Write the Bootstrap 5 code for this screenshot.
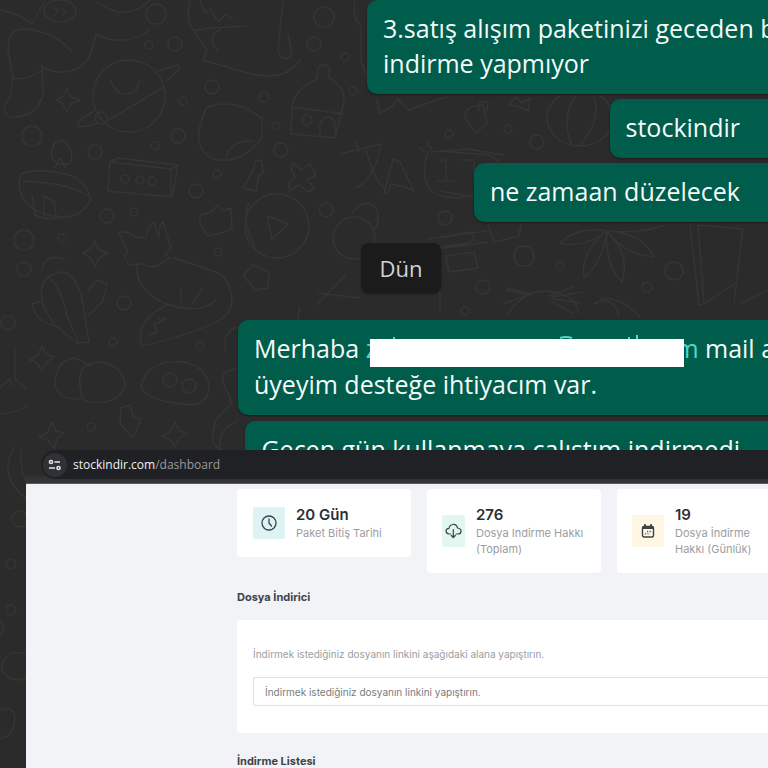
<!DOCTYPE html>
<html lang="tr">
<head>
<meta charset="utf-8">
<meta name="viewport" content="width=device-width, initial-scale=1">
<title>stockindir.com</title>
<link href="https://cdn.jsdelivr.net/npm/bootstrap@5.3.0/dist/css/bootstrap.min.css" rel="stylesheet">
<style>
body{background:#2b2b2b;font-family:Inter,"Open Sans",sans-serif;overflow:hidden}
.screen{min-height:100vh}
.doodles{position:absolute;inset:0;z-index:0;fill:none;stroke:#353534;stroke-width:1.5;stroke-linecap:round;stroke-linejoin:round}
.chat{height:450px;font-family:"Open Sans","Noto Sans",sans-serif;font-size:25px;line-height:35px;color:#f4fbf9;z-index:1}
.bubble{background:#005c4b;border-radius:10px 0 0 10px;padding:11px 28px 13px 16px;margin-bottom:5px;white-space:nowrap;flex:none;box-shadow:0 1px 2px #1a1a1a}
.bubble-first{width:401px}
.bubble-mail{width:530px;margin-bottom:6px}
.day{background:#1b1b1b;color:#d2d2d2;font-size:22px;line-height:26px;padding:12px 0;width:80px;flex:none;border-radius:8px;margin:16px 327px 27px 0;text-align:center;box-shadow:0 1px 2px #1a1a1a}
.mail-link{color:#53d6cb;text-decoration:none}
.redact{display:inline-block;width:314px;height:28px;background:#fff;vertical-align:-9px;margin-left:-7px;position:relative}
.redact svg{position:absolute;left:0;top:-4px;fill:none;stroke:#53d6cb;stroke-width:2}
.redact + span{margin-left:-9px}
.browser{margin-left:26px;z-index:1}
.toolbar{background:linear-gradient(#2b2b2b 0 24px,#353535 30px);height:34px;border-bottom:1px solid #5b5b5b}
.address{background:#202124;height:29px;margin-left:15px;border-radius:15px 0 0 15px;font-family:"Open Sans","Noto Sans",sans-serif;font-size:12px;color:#9a9b9e}
.address a{color:inherit;text-decoration:none}
.address b{color:#f1f1f1;font-weight:400}
.site-btn{width:24px;height:24px;background:#303136;border:0;border-radius:50%;padding:0;margin:0 6px 0 2px}
.dash{background:#f2f3f7;height:284px;padding:5px 0 0 211px;overflow:hidden}
.stats{gap:16px}
.stat{background:#fff;border-radius:4px;width:174px;flex:none;padding:16px;gap:11px}
.stat-wide{padding-left:15px}
.tile{width:32px;height:32px;border-radius:2px;flex:none}
.tile-time{background:#def4f4}
.tile-cloud{background:#e2f8ee;width:23px}
.tile-day{background:#fff6e3}
.tile svg{fill:none;stroke:#3b4248;stroke-linecap:round;stroke-linejoin:round}
.num{font-size:15px;line-height:20px;font-weight:600;color:#2c3036}
.cap{font-size:11px;line-height:16px;color:#9b9da1;white-space:nowrap}
.head{font-size:11px;line-height:16px;font-weight:700;color:#3e444b;margin:0}
.head-form{margin:16px 0 15px}
.head-list{margin-top:20px}
.panel{background:#fff;border-radius:4px 0 0 4px;padding:27px 0 27px 16px}
.panel label{font-size:10px;line-height:15px;color:#9b9da1;display:block;margin-bottom:15px}
.panel input{border-radius:3px 0 0 3px;border:1px solid #dfe1e5;border-right:0;font-size:10px;line-height:16px;padding:5px 11px;min-height:0;height:29px}
.panel input::placeholder{color:#787b80}
</style>
<script src="https://cdn.jsdelivr.net/npm/bootstrap@5.3.0/dist/js/bootstrap.bundle.min.js"></script>
</head>
<body>
<div class="screen position-relative overflow-hidden">
<svg class="doodles" width="768" height="768" viewBox="0 0 768 768" aria-hidden="true">
<!-- sock, planet, fruit -->
<path d="M8 50C8 34 14 28 27 29C45 31 60 38 72 52M8 50L13 78M42 66L43 95C38 112 24 118 12 117C2 115 2 106 10 98L13 78Q28 81 42 70M41 66C62 78 84 72 92 50L96 34C110 42 130 44 150 30M0 10Q20 14 32 24L44 2M98 2Q125 24 150 0"/>
<ellipse cx="60" cy="11" rx="16" ry="11"/><path d="M54 8l5 3-5 4m8-7 4 3-3 4"/>
<circle cx="156" cy="14" r="10"/><circle cx="129" cy="96" r="36"/><path d="M158 71L178 65Q184 67 166 81M162 88L107 121M94 111Q78 120 77 126Q85 128 98 123"/><circle cx="101" cy="118" r="6"/><path d="M111 81q5 14 16 13t12-13"/>
<circle cx="149" cy="45" r="4"/><circle cx="175" cy="44" r="7"/><circle cx="212" cy="87" r="7"/><circle cx="183" cy="101" r="4"/><circle cx="178" cy="136" r="7"/><circle cx="155" cy="146" r="4"/><circle cx="32" cy="136" r="10"/><circle cx="95" cy="152" r="7"/><circle cx="196" cy="191" r="7"/><circle cx="217" cy="174" r="4"/>
<path d="M67 88l4 9 9 3-9 4-4 8-4-8-7-4 7-3zM190 0Q185 20 194 31L207 50L203 60L244 72Q284 84 300 60M194 31L210 28L247 26M200 0l5 13 6-4 7 13 8-8 7 5M221 29Q205 37 218 51M283 0L278 50Q282 64 292 55L288 34M355 0Q352 18 361 26V60L369 84"/>
<path d="M206 108Q222 100 246 108L262 118V138Q240 166 213 159Q194 149 200 126ZM226 158Q230 140 253 141"/>
<!-- dish, radio, bottle -->
<path d="M21 174C31 169 58 170 75 177Q88 186 91 200Q80 217 65 217Q20 215 19 183ZM23 181Q70 183 88 196M32 195L35 215Q50 222 69 216M44 215V196l10 6 2 14M52 156Q50 142 62 140Q76 150 70 163Q55 168 52 156zM55 168l5-10 6 10"/>
<path d="M110 162l8-4 60 7-6 32-64-6zM110 162l61 7 7-4M171 169v27"/><circle cx="125" cy="179" r="4"/><circle cx="140" cy="180" r="4"/><circle cx="152" cy="181" r="4"/>
<circle cx="324" cy="17" r="10"/><circle cx="314" cy="44" r="7"/><circle cx="345" cy="57" r="4"/><circle cx="353" cy="91" r="4"/><circle cx="264" cy="97" r="5"/><circle cx="276" cy="126" r="4"/><circle cx="281" cy="150" r="7"/>
<path d="M318 68q6-8 12 1l-2 8q17 10 16 24l-9 37-44-4 1-28q2-16 25-27zM292 107l52 7"/><circle cx="307" cy="120" r="5"/><path d="M320 136v-13q7-11 15-1v15"/>
<path d="M376 98l4 15 10-5 8-9 10 11 38-13M340 154l42-10M356 140l3 12M366 150Q374 180 386 190M380 148q-5 30-24 40M384 194l9-35 7 3 14 29-9-4-14-3-3 9zM419 147l6 5m1-11l6 8M428 152Q420 175 430 190Q442 200 465 197M430 152l38-3 35 6M440 162l6-3v22m-9 0h17M462 160h12v22M243 188l11-20q-1-8 7-8l3 12-5 3-3 16zM293 163l8 7 9-6 6 11-9 5 8 8-7 4-9-7-10 6 0-9 6-5-4-9z"/>
<circle cx="277" cy="226" r="32"/><path d="M267 216l21 8-16 15z"/><circle cx="326" cy="210" r="7"/><circle cx="354" cy="238" r="21"/><path d="M353 212Q363 197 376 208Q381 220 374 230M427 239l60-8M430 250l58-8"/>
<!-- fox, cactus, food -->
<path d="M119 233Q124 229 136 237L146 238Q148 224 154 222L159 238Q158 226 163 222L171 248L165 254L170 258L158 265Q150 269 143 264L129 265L124 256L128 252ZM137 266Q135 290 166 304Q202 315 216 300M173 258Q207 268 222 275Q241 300 224 317Q202 332 142 346Q133 323 166 305M158 318l8 1-12 5 3 8-8 3M181 303v-15M192 304l10-15M200 215q-2 10 8 21l14-3 10-5-1-20-8 3-5-6-8 8zM249 203q-8 19 6 43"/>
<path d="M55 325C35 300 38 278 57 273Q73 267 82 298L89 342L77 343ZM47 276Q62 288 67 316L78 341M60 327Q35 323 32 304L43 301M88 290l10-10 9 4-4 17-15 15M42 270q2-17 23-11M15 347v32l11 10M0 414q18-2 27-8M0 388l9-9 5 7"/>
<path d="M55 383Q56 360 75 358L91 366M81 392Q74 362 101 362Q124 366 125 386Q117 405 93 402Q82 403 81 392M55 383Q57 400 80 399"/>
<path d="M141 386Q148 359 182 362Q209 366 209 390Q205 408 182 404Q145 400 141 386"/><circle cx="170" cy="380" r="7"/><circle cx="189" cy="386" r="7"/>
<path d="M95 241l4 9 9 3-9 5-4 9-4-9-8-5 8-4zM42 346l4 9 8 1-8 7-4 8-5-8-7-3 8-5zM52 422l4 9 8 2-7 6-3 9-6-8-9-3 9-5zM175 422l4 9 8 2-8 6-4 8-5-8-9-3 9-4zM121 408l9-3 3 12 8 2-8 19-13-15z"/>
<circle cx="24" cy="240" r="10"/><circle cx="24" cy="269" r="7"/><circle cx="124" cy="303" r="7"/><circle cx="113" cy="342" r="4"/><circle cx="200" cy="346" r="4"/><circle cx="91" cy="427" r="4"/><circle cx="218" cy="252" r="4"/><circle cx="8" cy="323" r="7"/><circle cx="62" cy="238" r="4"/><circle cx="107" cy="216" r="7"/><circle cx="134" cy="212" r="4"/>
<!-- right side -->
<ellipse cx="580" cy="118" rx="33" ry="28"/><path d="M579 90q-20 27-7 55M592 91q12 27-12 54M465 118q-1-13 18-13l4 18-11 10zM478 111l2-9h8l-1 10M509 105l7-8 6 6 8-5-2 13-8-4zM440 151l50 4 12 9M440 191l34 6"/>
<circle cx="508" cy="129" r="4"/><circle cx="537" cy="142" r="7"/><circle cx="449" cy="134" r="4"/><circle cx="524" cy="256" r="10"/><circle cx="560" cy="266" r="4"/><circle cx="483" cy="287" r="7"/><circle cx="674" cy="271" r="9"/><circle cx="647" cy="287" r="5"/><circle cx="465" cy="311" r="4"/><circle cx="445" cy="218" r="7"/>
<path d="M488 225l6 17 25-6 2-12M442 237l27-5q10 5 0 11l-28 4M446 256l28-4 4 16-29 4zM607 231Q575 226 560 244Q588 247 607 231Q580 252 584 278Q603 261 607 231Q604 263 622 282Q631 254 607 231Q623 254 654 257Q643 233 607 231Q640 234 665 225M690 223l9 82 5-1-6-79 45 4-9 73M704 304l30-20M742 303l26-13M503 304l28-10-25-6m23 7-23-5m2 24q15-24 40-23 30 4 30 22M550 296l25-10m-23 11l30-5m-29 7l27 4m-28-1l20 11M594 304q18-10 25 11m-18-16q22-2 39 18"/>
<path d="M243 275l10-10 16 7-1 16-13 2zM440 268v45M318 293l42 5M300 307q-6 20 5 35M345 275l-28 30M239 327q-18 3-13 25M238 369q-20 1-14 16l8 18-16 17q-9 28 8 30M220 450q-3-21 18-29"/>
<!-- left margin below -->
<path d="M14 447Q-3 477 27 499M21 450q-1 25 7 35"/><circle cx="20" cy="519" r="8"/><circle cx="11" cy="564" r="5"/><circle cx="11" cy="610" r="5"/><path d="M26 653H11Q0 661 2 671Q12 684 26 678M0 710q18-6 14 16-5 13-14 12M0 620l4 8-4 8"/>
</svg>

<main class="chat position-relative overflow-hidden d-flex flex-column align-items-end">
<div class="bubble bubble-first">3.satış alışım paketinizi geceden b<br>indirme yapmıyor</div>
<div class="bubble">stockindir</div>
<div class="bubble">ne zamaan düzelecek</div>
<div class="day">Dün</div>
<div class="bubble bubble-mail">Merhaba <a class="mail-link" href="#">z<span class="redact"><svg width="314" height="4" aria-hidden="true"><path d="M24 2v2M190 3q6-2 12 0M259 2v2M267 0v4"/></svg></span><span>m</span></a> mail a<br>üyeyim desteğe ihtiyacım var.</div>
<div class="bubble">Geçen gün kullanmaya çalıştım indirmedi</div>
</main>

<section class="browser position-relative">
<div class="toolbar">
<div class="address d-flex align-items-center">
<button class="site-btn d-flex align-items-center justify-content-center" type="button" aria-label="Site bilgileri"><svg width="14" height="12" viewBox="0 0 14 12" fill="none" stroke="#e6e6e6" stroke-width="1.5"><circle cx="3" cy="3" r="1.6"/><path d="M6.500 3H12M1 9h6"/><circle cx="10.500" cy="9" r="1.600"/></svg></button>
<a href="#"><b>stockindir.com</b>/dashboard</a>
</div>
</div>
<div class="dash">
<div class="stats d-flex align-items-start">
<div class="stat d-flex align-items-center"><span class="tile tile-time d-flex align-items-center justify-content-center"><svg width="16" height="16" viewBox="0 0 16 16"><circle cx="8" cy="8" r="7" stroke-width="1.300"/><path d="M8 4v4l2.500 3" stroke-width="1.300"/></svg></span><div><div class="num">20 Gün</div><div class="cap">Paket Bitiş Tarihi</div></div></div>
<div class="stat stat-wide d-flex align-items-center"><span class="tile tile-cloud d-flex align-items-center justify-content-center"><svg width="17" height="16" viewBox="0 0 17 16" stroke-width="1.200"><path d="M5.500 11H4Q1 10.500 1 8T4 5.300Q4.500 2 8 1.500T12.500 5Q16 5.500 16 8.200T13 11H11M8.300 6.500v8M6.300 12.500l2 2 2-2"/></svg></span><div><div class="num">276</div><div class="cap">Dosya Indirme Hakkı<br>(Toplam)</div></div></div>
<div class="stat stat-wide d-flex align-items-center"><span class="tile tile-day d-flex align-items-center justify-content-center"><svg width="14" height="14" viewBox="0 0 14 14"><rect x="1.500" y="2.500" width="11" height="10.500" rx="1.500" stroke-width="1.400"/><path d="M2 4h10M4 1v2M10 1v2" stroke-width="2"/><path d="M6.500 7.500h.1M9 7.500h.1M4.500 9.800h.1M7 9.800h.1" stroke-width="1.300"/></svg></span><div><div class="num">19</div><div class="cap">Dosya İndirme<br>Hakkı (Günlük)</div></div></div>
</div>
<h2 class="head head-form">Dosya İndirici</h2>
<div class="panel">
<label for="fileLink">İndirmek istediğiniz dosyanın linkini aşağıdaki alana yapıştırın.</label>
<input id="fileLink" class="form-control" type="text" placeholder="İndirmek istediğiniz dosyanın linkini yapıştırın.">
</div>
<h2 class="head head-list">İndirme Listesi</h2>
</div>
</section>
</div>
</body>
</html>
